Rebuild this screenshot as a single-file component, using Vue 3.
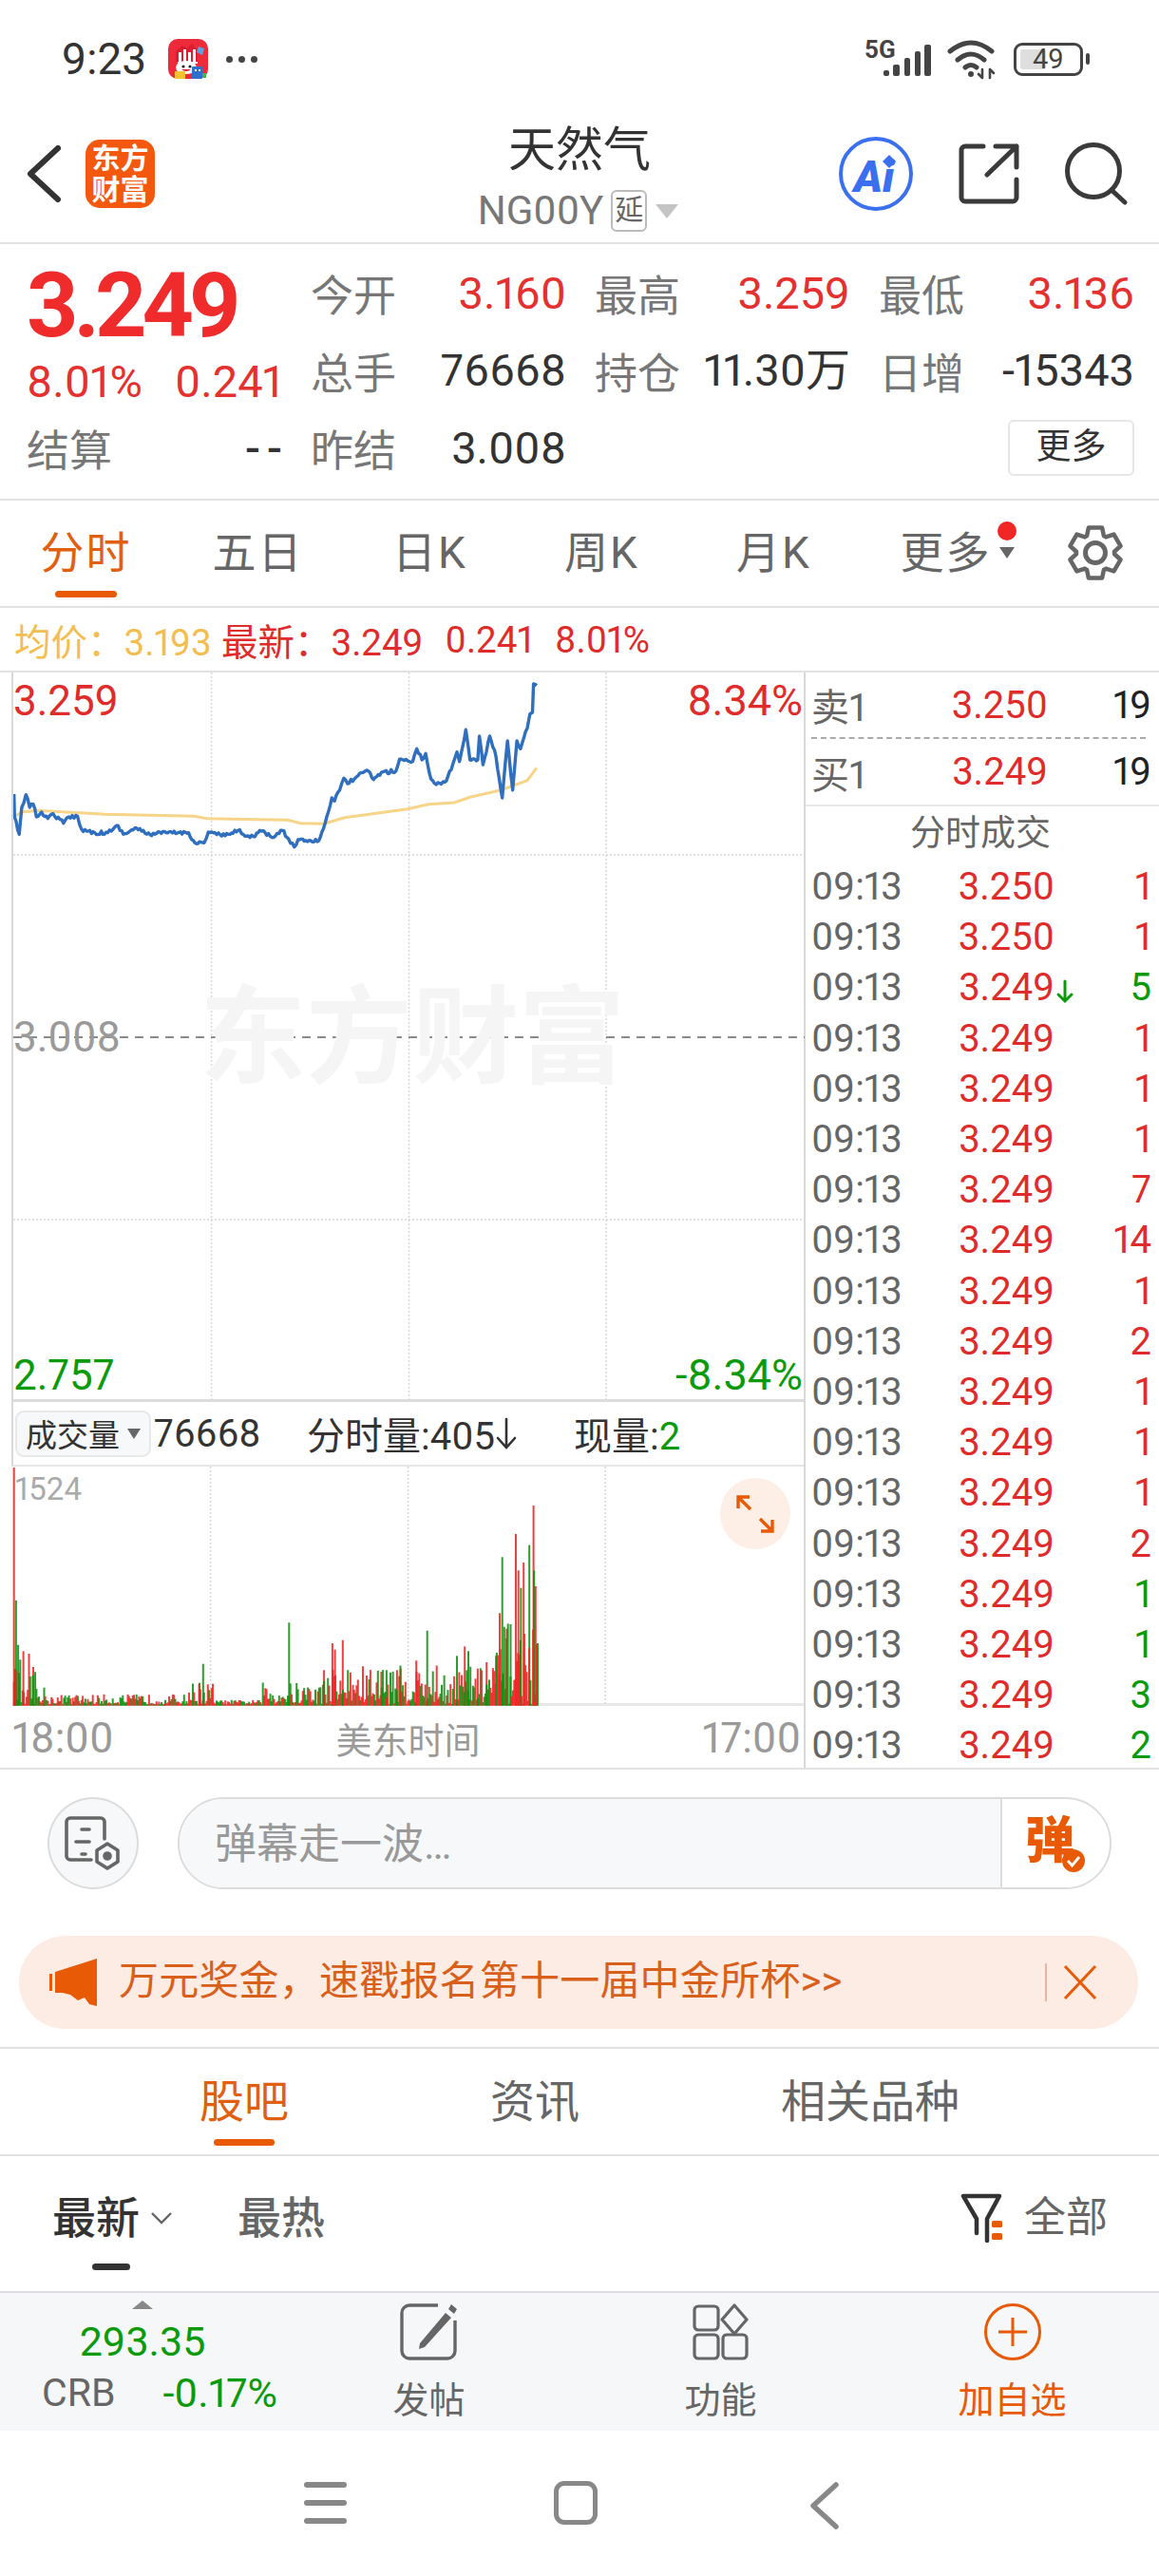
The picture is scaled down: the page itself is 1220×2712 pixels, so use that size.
<script setup>
const X = (z) => +(z / 1.823).toFixed(1)
const MY = (z) => +(530 + z / 3).toFixed(1)
const VY = (z) => +(1430 + z / 3).toFixed(1)

let seed = 12345
const rnd = () => {
  seed = (seed * 16807) % 2147483647
  return seed / 2147483647
}

const blueKeys = [[25,918],[26,990],[35,1045],[40,960],[48,920],[55,960],[62,950],[68,990],[78,975],[90,995],[100,980],[120,1010],[130,990],[147,988],[155,1030],[180,1040],[205,1040],[225,1018],[235,1045],[260,1025],[280,1045],[320,1040],[360,1040],[372,1072],[390,1072],[398,1038],[430,1050],[455,1033],[478,1055],[500,1035],[520,1055],[540,1033],[552,1060],[563,1085],[570,1062],[610,1065],[622,1010],[635,930],[640,940],[650,905],[658,868],[665,885],[685,860],[705,845],[715,872],[730,850],[758,845],[765,808],[790,815],[798,775],[808,810],[815,790],[825,870],[835,888],[855,875],[870,810],[875,785],[880,815],[892,715],[900,810],[915,810],[918,735],[925,825],[938,735],[950,800],[962,930],[972,750],[982,905],[990,750],[997,775],[1010,710],[1015,665],[1020,660],[1022,570],[1028,575]]
const blue = []
blueKeys.forEach(([x, y], i) => {
  const next = blueKeys[i + 1]
  blue.push(`${X(x)},${MY(y)}`)
  if (next && next[0] - x > 5) {
    const n = Math.floor((next[0] - x) / 3)
    for (let k = 1; k < n; k++) {
      const t = k / n
      blue.push(`${X(x + (next[0] - x) * t)},${MY(y + (next[1] - y) * t + (rnd() - 0.5) * 12)}`)
    }
  }
})
const bluePts = blue.join(' ')
const yellowPts = [[25,990],[40,975],[70,970],[200,982],[370,988],[395,995],[550,1000],[575,1010],[620,1012],[660,992],[780,965],[820,950],[870,945],[900,928],[960,905],[1010,875],[1028,835]]
  .map(([x, y]) => `${X(x)},${MY(y)}`).join(' ')

const envelope = (x) => {
  if (x < 70) return 170
  if (x < 360) return 32
  if (x < 410) return 70
  if (x < 500) return 14
  if (x < 620) return 70
  if (x < 950) return 125
  return 260
}
const bars = []
for (let x = 25; x <= 1030; x += 2.4) {
  const h = Math.pow(rnd(), 1.4) * envelope(x) + 4
  bars.push({ x: X(x), top: VY(1097 - h), h: +(h / 3).toFixed(1), c: rnd() > 0.45 ? '#ee2424' : '#0c8f0c' })
}
const peaks = [
  [25,345,'r'],[29,765,'g'],[33,905,'g'],[43,925,'r'],[62,975,'r'],[83,1040,'g'],[388,965,'g'],[381,1025,'g'],[553,835,'g'],
  [620,985,'r'],[636,900,'r'],[641,920,'r'],[656,890,'r'],[730,990,'r'],[740,985,'g'],[760,985,'r'],[767,980,'r'],[797,955,'r'],
  [818,860,'g'],[875,940,'g'],[890,910,'r'],[897,925,'g'],[915,980,'r'],[932,960,'r'],[950,940,'r'],[957,805,'r'],[962,628,'g'],
  [970,885,'g'],[978,840,'g'],[988,555,'r'],[993,670,'r'],[998,725,'g'],[1003,645,'r'],[1014,590,'g'],[1022,465,'r'],[1023,670,'g'],[1026,720,'r'],[1030,900,'g']
].map(([x, t, c]) => ({ x: X(x), top: VY(t), h: +((1097 - t) / 3).toFixed(1), c: c === 'r' ? '#ee2424' : '#0c8f0c' }))
const volBars = [...peaks, ...bars]

const gearPts = (() => {
  const pts = []
  for (let i = 0; i < 6; i++) {
    const a = (i * Math.PI) / 3
    const p = (r, d) => {
      const t = a + d
      return `${(30 + r * Math.sin(t)).toFixed(1)},${(30 - r * Math.cos(t)).toFixed(1)}`
    }
    pts.push(p(20, -0.46), p(27.5, -0.26), p(27.5, 0.26), p(20, 0.46))
  }
  return pts.join(' ')
})()

const stats = [
  [{ l: '今开', v: '3.160', c: 'up' }, { l: '最高', v: '3.259', c: 'up' }, { l: '最低', v: '3.136', c: 'up' }],
  [{ l: '总手', v: '76668' }, { l: '持仓', v: '11.30万' }, { l: '日增', v: '-15343' }]
]
const tabs = ['分时', '五日', '日K', '周K', '月K']
const trades = [
  ['3.250', '1', 'up'], ['3.250', '1', 'up'], ['3.249', '5', 'down', true], ['3.249', '1', 'up'], ['3.249', '1', 'up'], ['3.249', '1', 'up'],
  ['3.249', '7', 'up'], ['3.249', '14', 'up'], ['3.249', '1', 'up'], ['3.249', '2', 'up'], ['3.249', '1', 'up'], ['3.249', '1', 'up'],
  ['3.249', '1', 'up'], ['3.249', '2', 'up'], ['3.249', '1', 'down'], ['3.249', '1', 'down'], ['3.249', '3', 'down'], ['3.249', '2', 'down']
]
const gridX = [221.6, 429.5, 637]
</script>

<template>
  <div class="page">
    <div class="status">
      <span class="time">9:23</span>
      <svg class="app" width="42" height="42" viewBox="0 0 42 42">
        <rect width="42" height="42" rx="10" fill="#ee2b3a" />
        <path d="M8 13 L15 7 L20 10 L25 5 L31 12 V24 H8 Z" fill="#d81e30" />
        <rect x="11" y="14" width="3" height="11" fill="#fff" />
        <rect x="16" y="11" width="3" height="14" fill="#fff" />
        <rect x="21" y="14" width="3" height="11" fill="#fff" />
        <rect x="26" y="11" width="3" height="14" fill="#fff" />
        <rect x="10" y="24" width="21" height="2" fill="#fff" />
        <path d="M32 8 l6 2 l-2 7 l-6 -3 Z" fill="#5aa5e0" />
        <ellipse cx="19" cy="30" rx="11" ry="7" fill="#fff" />
        <circle cx="16" cy="29" r="1.6" fill="#222" />
        <circle cx="23" cy="29" r="1.6" fill="#222" />
        <path d="M14 32 q5 4 10 0 z" fill="#d81e30" />
        <rect x="7" y="34" width="11" height="8" rx="1" fill="#f4c430" />
        <rect x="25" y="29" width="11" height="13" rx="1" fill="#2e6fcb" />
        <rect x="28" y="32" width="2" height="2" fill="#fff" />
        <rect x="32" y="32" width="2" height="2" fill="#fff" />
        <rect x="36" y="36" width="4" height="5" fill="#4cae4c" />
      </svg>
      <span class="dots"><i></i><i></i><i></i></span>
      <div class="status-right">
        <svg width="72" height="52" viewBox="0 0 72 52">
          <text x="0" y="25" class="fiveg">5G</text>
          <g fill="#444">
            <rect x="20" y="38" width="6" height="6" rx="2" />
            <rect x="30" y="32" width="7" height="12" rx="2" />
            <rect x="42" y="25" width="6" height="19" rx="2" />
            <rect x="53" y="18" width="6" height="26" rx="2" />
            <rect x="63" y="11" width="7" height="33" rx="2" />
          </g>
        </svg>
        <svg class="wifi" width="56" height="44" viewBox="0 0 56 44" fill="none" stroke="#444" stroke-linecap="round">
          <path d="M4 14 Q26 -4 48 14" stroke-width="5" />
          <path d="M12 23 Q26 11 40 23" stroke-width="5" />
          <path d="M20 31 Q26 26 32 31" stroke-width="5" />
          <circle cx="26" cy="38" r="3" fill="#444" stroke="none" />
          <path d="M38 33 V42 M34 38 L38 42 M46 42 V33 M46 33 L50 37" stroke-width="2.6" />
        </svg>
        <div class="battery">
          <div class="battery-body">
            <span class="battery-fill"></span>
            <span class="battery-text">49</span>
          </div>
          <span class="battery-tip"></span>
        </div>
      </div>
    </div>

    <header class="header">
      <div class="h-left">
        <svg width="36" height="60" viewBox="0 0 36 60" fill="none"><path d="M33 3 L4 30 L33 57" stroke="#333" stroke-width="6" stroke-linecap="round" stroke-linejoin="round" /></svg>
        <div class="logo">东方<br />财富</div>
      </div>
      <div class="h-center">
        <div class="title">天然气</div>
        <div class="code">
          <span>NG00Y</span><span class="yan">延</span><span class="tri"></span>
        </div>
      </div>
      <div class="h-right">
        <div class="ai">
          <span class="ai-text">Ai</span>
          <svg class="ai-star" width="14" height="14" viewBox="0 0 14 14"><path d="M7 0 L14 7 L7 14 L0 7 Z" fill="#3a6ff0" /></svg>
        </div>
        <svg width="64" height="64" viewBox="0 0 64 64" fill="none" stroke="#3a3a3a" stroke-width="5" stroke-linecap="round" stroke-linejoin="round">
          <path d="M26 3 H7 a4 4 0 0 0 -4 4 V57 a4 4 0 0 0 4 4 H57 a4 4 0 0 0 4 -4 V38" />
          <path d="M30 33 L61 3 M39 3 H61 V25" />
        </svg>
        <svg width="66" height="66" viewBox="0 0 66 66" fill="none" stroke="#3a3a3a" stroke-width="5" stroke-linecap="round">
          <circle cx="30" cy="30" r="27.5" />
          <path d="M49 50 L63 63" />
        </svg>
      </div>
    </header>

    <section class="quote">
      <div class="big">3.249</div>
      <div v-for="s in stats[0]" :key="s.l" class="cell"><span class="lab">{{ s.l }}</span><span class="val" :class="s.c">{{ s.v }}</span></div>
      <div class="cell sub-cell"><span class="sub">8.01%</span><span class="sub">0.241</span></div>
      <div v-for="s in stats[1]" :key="s.l" class="cell"><span class="lab">{{ s.l }}</span><span class="val">{{ s.v }}</span></div>
      <div class="cell"><span class="lab">结算</span><span class="val dash">--</span></div>
      <div class="cell"><span class="lab">昨结</span><span class="val">3.008</span></div>
      <div></div>
      <div class="more-cell"><span class="more-btn">更多</span></div>
    </section>

    <nav class="tabs">
      <div v-for="(t, i) in tabs" :key="t" class="tab" :class="{ active: i === 0 }">
        <span class="tab-label">{{ t }}</span>
        <i class="tab-bar"></i>
      </div>
      <div class="tab tab-more">
        <span class="tab-label">更多</span>
        <i class="red-dot"></i>
        <i class="more-tri"></i>
      </div>
      <div class="gear">
        <svg width="60" height="60" viewBox="0 0 60 60" fill="none" stroke="#666">
          <polygon :points="gearPts" stroke-width="4.5" stroke-linejoin="round" />
          <circle cx="30" cy="30" r="10.5" stroke-width="5" />
        </svg>
      </div>
    </nav>

    <div class="avg">
      <span class="yl">均价：3.193</span>
      <span class="rd">最新：3.249</span>
      <span class="rd">0.241</span>
      <span class="rd">8.01%</span>
    </div>

    <section class="body">
      <div class="left">
        <div class="main-chart">
          <svg class="chart-svg" width="833" height="765" viewBox="13 708 833 765">
            <line v-for="x in gridX" :key="x" :x1="x" :x2="x" y1="708" y2="1473" stroke="#d8d8d8" stroke-width="1.5" stroke-dasharray="2 2" />
            <line x1="13" x2="846" y1="900" y2="900" stroke="#d8d8d8" stroke-width="1.5" stroke-dasharray="2 2" />
            <line x1="13" x2="846" y1="1284" y2="1284" stroke="#d8d8d8" stroke-width="1.5" stroke-dasharray="2 2" />
            <line x1="13" x2="846" y1="1092" y2="1092" stroke="#8a8a8a" stroke-width="2" stroke-dasharray="9 7" />
            <polyline :points="yellowPts" fill="none" stroke="#f6d488" stroke-width="3" />
            <polyline :points="bluePts" fill="none" stroke="#2f6fbe" stroke-width="3.4" stroke-linejoin="round" />
          </svg>
          <div class="watermark">东方财富</div>
          <span class="cl tl rd">3.259</span>
          <span class="cl tr rd">8.34%</span>
          <span class="cl ml gr">3.008</span>
          <span class="cl bl grn">2.757</span>
          <span class="cl br grn">-8.34%</span>
        </div>
        <div class="vol-head">
          <div class="vol-select"><span>成交量</span><i class="sel-tri"></i></div>
          <span class="vol-total">76668</span>
          <span class="vol-fs">分时量:405<svg width="24" height="44" viewBox="0 0 24 44" fill="none" stroke="#333" stroke-width="2.6" stroke-linecap="round"><path d="M12 7 V37 M3 27 L12 37 L21 27" /></svg></span>
          <span class="vol-now">现量:<b>2</b></span>
        </div>
        <div class="vol">
          <svg class="chart-svg" width="833" height="252" viewBox="13 1544 833 252">
            <line v-for="x in gridX" :key="x" :x1="x" :x2="x" y1="1544" y2="1796" stroke="#d8d8d8" stroke-width="1.5" stroke-dasharray="2 2" />
            <rect v-for="(b, i) in volBars" :key="i" :x="b.x" :y="b.top" width="2" :height="b.h" :fill="b.c" opacity="0.88" />
          </svg>
          <span class="vol-max">1524</span>
          <div class="expand">
            <svg width="40" height="40" viewBox="0 0 40 40" fill="none" stroke="#e85a05" stroke-width="3.4">
              <path d="M2 14 V2 H14 M2 2 L15 15 M38 26 V38 H26 M38 38 L25 25" />
            </svg>
          </div>
        </div>
        <div class="axis">
          <span class="ax-t">18:00</span>
          <span class="ax-c">美东时间</span>
          <span class="ax-t">17:00</span>
        </div>
      </div>

      <aside class="right">
        <div class="book"><span class="book-l">卖1</span><span class="book-p">3.250</span><span class="book-v">19</span></div>
        <div class="book-sep"></div>
        <div class="book"><span class="book-l">买1</span><span class="book-p">3.249</span><span class="book-v">19</span></div>
        <div class="tr-title">分时成交</div>
        <div class="tr-list">
          <div v-for="(t, i) in trades" :key="i" class="tr-row">
            <span class="tr-time">09:13</span>
            <span class="tr-price">{{ t[0] }}
              <svg v-if="t[3]" class="tr-arrow" width="20" height="30" viewBox="0 0 20 30" fill="none" stroke="#0a9a0a" stroke-width="3" stroke-linecap="round"><path d="M10 4 V25 M3 18 L10 25 L17 18" /></svg>
            </span>
            <span class="tr-amt" :class="t[2]">{{ t[1] }}</span>
          </div>
        </div>
      </aside>
    </section>

    <section class="comment">
      <div class="input-row">
        <div class="cbtn">
          <svg width="64" height="58" viewBox="0 0 64 58" fill="none" stroke="#666" stroke-width="3.6" stroke-linecap="round" stroke-linejoin="round">
            <path d="M44 24 V6 a4 4 0 0 0 -4 -4 H8 a4 4 0 0 0 -4 4 V42 a4 4 0 0 0 4 4 H30" />
            <path d="M20 14 H28 M14 27 H28 M20 40 H24" />
            <path d="M47 29 L58 36 V48 L47 55 L36 48 V36 Z" />
            <circle cx="47" cy="42" r="3" fill="#666" />
          </svg>
        </div>
        <div class="cinput">
          <div class="cfield">弹幕走一波…</div>
          <div class="csend">
            <span class="dan">弹</span>
            <svg class="dan-check" width="26" height="26" viewBox="0 0 26 26"><circle cx="13" cy="13" r="12" fill="#e85a05" /><path d="M7 13 L11.5 18 L19 9" fill="none" stroke="#fff" stroke-width="2.8" /></svg>
          </div>
        </div>
      </div>
      <div class="banner">
        <svg width="50" height="50" viewBox="0 0 50 50"><path d="M0 16 H3 V34 H0 Z M6 14 L50 0 V50 L42 48 L37 41 L30 44 L22 38 L14 36 H6 Z" fill="#e85a05" /></svg>
        <span class="banner-text">万元奖金，速戳报名第十一届中金所杯&gt;&gt;</span>
        <i class="banner-sep"></i>
        <svg width="36" height="38" viewBox="0 0 36 38" fill="none" stroke="#e85a05" stroke-width="3"><path d="M2 2 L34 36 M34 2 L2 36" /></svg>
      </div>
    </section>

    <nav class="sub-tabs">
      <div class="stab active"><span>股吧</span><i></i></div>
      <div class="stab"><span>资讯</span><i></i></div>
      <div class="stab"><span>相关品种</span><i></i></div>
    </nav>

    <div class="sort">
      <div class="sort-item on">
        <span>最新</span>
        <svg width="24" height="14" viewBox="0 0 24 14" fill="none" stroke="#666" stroke-width="2.4"><path d="M2 2 L12 12 L22 2" /></svg>
        <i class="sort-bar"></i>
      </div>
      <div class="sort-item hot"><span>最热</span></div>
      <div class="sort-filter">
        <svg width="46" height="52" viewBox="0 0 46 52" fill="none">
          <path d="M3 3 H41 L28 27 V50 M3 3 L17 27 V42" stroke="#333" stroke-width="4.5" stroke-linecap="round" stroke-linejoin="round" />
          <rect x="33" y="29" width="11" height="7" rx="1.5" fill="#e85a05" />
          <rect x="33" y="42" width="11" height="7" rx="1.5" fill="#e85a05" />
        </svg>
        <span>全部</span>
      </div>
    </div>

    <footer class="bar">
      <div class="crb">
        <i class="crb-tri"></i>
        <div class="crb-val">293.35</div>
        <div class="crb-line"><span class="crb-name">CRB</span><span class="crb-pct">-0.17%</span></div>
      </div>
      <div class="bar-item">
        <svg width="62" height="60" viewBox="0 0 62 60" fill="none" stroke="#666" stroke-width="3.4" stroke-linejoin="round">
          <path d="M40 2 H10 a8 8 0 0 0 -8 8 V50 a8 8 0 0 0 8 8 H50 a8 8 0 0 0 8 -8 V18" />
          <path d="M54 1 L60 6 L57 11 L51 6 Z M48 10 L54 15 L26 46 L20 48 L21 42 Z" fill="#666" stroke="none" />
        </svg>
        <span>发帖</span>
      </div>
      <div class="bar-item">
        <svg width="60" height="60" viewBox="0 0 60 60" fill="none" stroke="#666" stroke-width="3.2" stroke-linejoin="round">
          <rect x="2" y="3" width="25" height="25" rx="4" />
          <path d="M44 2 L57 17 L44 32 L31 17 Z" />
          <rect x="2" y="33" width="25" height="25" rx="4" />
          <rect x="32" y="33" width="25" height="25" rx="4" />
        </svg>
        <span>功能</span>
      </div>
      <div class="bar-item add">
        <svg width="60" height="60" viewBox="0 0 60 60" fill="none" stroke="#e85a05" stroke-width="3">
          <circle cx="30" cy="30" r="28.5" />
          <path d="M15 30 H45 M30 15 V45" />
        </svg>
        <span>加自选</span>
      </div>
    </footer>

    <div class="nav">
      <div class="nav-menu"><i></i><i></i><i></i></div>
      <div class="nav-home"></div>
      <svg width="32" height="50" viewBox="0 0 32 50" fill="none"><path d="M29 3 L5 25 L29 47" stroke="#888" stroke-width="5.5" stroke-linecap="round" stroke-linejoin="round" /></svg>
    </div>
  </div>
</template>

<style scoped>
.page {
  position: relative;
  width: 1220px;
  height: 2712px;
  background: #fff;
  overflow: hidden;
  display: flex;
  flex-direction: column;
  font-family: Roboto, "Noto Sans CJK SC", sans-serif;
  font-variant-numeric: proportional-nums;
  color: #333;
}
i { display: block; font-style: normal; }

/* status bar */
.status {
  height: 120px;
  flex: none;
  display: flex;
  align-items: center;
  padding: 4px 73px 0 65px;
  box-sizing: border-box;
}
.time { font-size: 46px; color: #333; line-height: 1; width: 112px; }
.app { flex: none; }
.dots { display: flex; gap: 6px; margin-left: 19px; }
.dots i { width: 7px; height: 7px; border-radius: 50%; background: #444; }
.status-right { margin-left: auto; display: flex; align-items: center; }
.fiveg { font: 700 26px Roboto, sans-serif; fill: #444; }
.wifi { margin-left: 14px; margin-right: 15px; }
.battery { display: flex; align-items: center; gap: 3px; }
.battery-body {
  position: relative;
  width: 73px;
  height: 35px;
  box-sizing: border-box;
  border: 3.5px solid #444;
  border-radius: 9px;
  display: flex;
  align-items: center;
  justify-content: center;
}
.battery-fill { position: absolute; left: 4px; top: 4px; bottom: 4px; width: 27px; background: #dedede; border-radius: 3px; }
.battery-text { position: relative; font-size: 29px; color: #444; }
.battery-tip { width: 4px; height: 12px; background: #444; border-radius: 2px; }

/* header */
.header {
  height: 137px;
  flex: none;
  box-sizing: border-box;
  border-bottom: 2px solid #e2e2e2;
  display: grid;
  grid-template-columns: 1fr auto 1fr;
  align-items: start;
}
.h-left { display: flex; align-items: center; padding: 27px 0 0 28px; gap: 26px; }
.logo {
  width: 73px;
  height: 72px;
  border-radius: 15px;
  background: #f4570e;
  color: #fff;
  font-size: 30px;
  font-weight: 700;
  line-height: 33px;
  text-align: center;
  padding-top: 3px;
  box-sizing: border-box;
  letter-spacing: 0;
}
.h-center { display: flex; flex-direction: column; align-items: center; padding-top: 7px; margin-left: -3px; }
.title { font-size: 50px; line-height: 62px; color: #333; margin-left: 3px; }
.code { display: flex; align-items: center; font-size: 42px; line-height: 48px; color: #777; margin-top: 9px; }
.yan {
  width: 38px;
  height: 44px;
  box-sizing: border-box;
  border: 2px solid #bbb;
  border-radius: 6px;
  font-size: 30px;
  line-height: 38px;
  text-align: center;
  margin-left: 8px;
  color: #666;
}
.tri {
  width: 0;
  height: 0;
  border-left: 12px solid transparent;
  border-right: 12px solid transparent;
  border-top: 15px solid #c4c4c4;
  margin-left: 9px;
}
.h-right { display: flex; justify-content: flex-end; align-items: center; gap: 48px; padding: 24px 33px 0 0; }
.ai {
  position: relative;
  width: 78px;
  height: 78px;
  box-sizing: border-box;
  border: 4px solid #3a6ff0;
  border-radius: 50%;
  text-align: center;
  margin-right: 0;
}
.ai-text { font-size: 46px; line-height: 76px; font-weight: 900; font-style: italic; color: #3a6ff0; margin-left: -4px; display: block; }
.ai-star { position: absolute; right: 14px; top: 15px; }

/* quote */
.quote {
  height: 270px;
  flex: none;
  box-sizing: border-box;
  border-bottom: 2px solid #e2e2e2;
  padding: 11px 28px 0 28px;
  display: grid;
  grid-template-columns: repeat(4, 269px);
  column-gap: 30px;
  grid-template-rows: repeat(3, 81.5px);
  align-items: center;
}
.big {
  font-size: 95px;
  font-weight: 700;
  color: #f02b2b;
  line-height: 70px;
  letter-spacing: -5px;
  margin-top: 26px;
  white-space: nowrap;
}
.cell { display: flex; justify-content: space-between; align-items: center; white-space: nowrap; }
.sub-cell { margin-top: 24px; }
.lab { font-size: 45px; color: #777; }
.val { font-size: 47px; line-height: 56px; color: #333; }
.val.up { color: #e53030; }
.val.dash { letter-spacing: 7px; margin-right: -7px; font-weight: 500; }
.sub { font-size: 47px; line-height: 56px; color: #e53030; }
.more-cell { display: flex; justify-content: flex-end; }
.more-btn {
  width: 133px;
  height: 59px;
  box-sizing: border-box;
  border: 2px solid #e6e6e6;
  border-radius: 6px;
  font-size: 37px;
  line-height: 53px;
  text-align: center;
  color: #333;
}

/* tabs */
.tabs {
  height: 113px;
  flex: none;
  box-sizing: border-box;
  border-bottom: 2px solid #e2e2e2;
  display: flex;
}
.tab { width: 181px; display: flex; flex-direction: column; align-items: center; padding-top: 26px; box-sizing: border-box; position: relative; }
.tab-label { font-size: 46px; line-height: 58px; color: #666; white-space: nowrap; letter-spacing: 2px; }
.tab-bar { width: 65px; height: 7px; margin-top: 11px; border-radius: 4px; }
.tab.active .tab-label { color: #e0600f; }
.tab.active .tab-bar { background: #e85a05; }
.red-dot { position: absolute; left: 145px; top: 22px; width: 20px; height: 20px; border-radius: 50%; background: #f32626; }
.more-tri {
  position: absolute;
  left: 147px;
  top: 49px;
  width: 0;
  height: 0;
  border-left: 8px solid transparent;
  border-right: 8px solid transparent;
  border-top: 12px solid #666;
}
.gear { flex: 1; display: flex; justify-content: center; padding-top: 25px; box-sizing: border-box; }

/* average */
.avg {
  height: 68px;
  flex: none;
  box-sizing: border-box;
  border-bottom: 2px solid #e2e2e2;
  padding: 0 0 0 15px;
  display: flex;
  align-items: center;
  font-size: 38.5px;
  white-space: nowrap;
}
.yl { color: #f4bd50; width: 218px; }
.rd { color: #e02b2b; }
.avg .rd { margin-right: 23px; }

/* body */
.body {
  height: 1155px;
  flex: none;
  box-sizing: border-box;
  border-bottom: 2px solid #e2e2e2;
  display: flex;
}
.left { width: 846px; flex: none; padding-left: 13px; box-sizing: border-box; }
.main-chart {
  position: relative;
  height: 768px;
  box-sizing: border-box;
  border-left: 2px solid #d8d8d8;
  border-bottom: 3px solid #dcdcdc;
  margin-left: -1px;
}
.chart-svg { position: absolute; left: 0; top: 0; display: block; }
.watermark {
  position: absolute;
  left: 196px;
  top: 330px;
  font-size: 112px;
  line-height: 112px;
  font-weight: 700;
  color: #f5f5f5;
  white-space: nowrap;
}
.cl { position: absolute; font-size: 44px; line-height: 50px; white-space: nowrap; }
.tl { left: 0; top: 5px; }
.tr { right: 1px; top: 5px; font-size: 45px; }
.ml { left: 0; top: 359px; color: #999; }
.gr { color: #9a9a9a; }
.bl { left: 0; top: 715px; }
.br { right: 1px; top: 715px; font-size: 45px; }
.grn { color: #0a9a0a; }
.vol-head {
  height: 68px;
  position: relative;
  border-left: 2px solid #d8d8d8;
  margin-left: -1px;
  border-bottom: 2px solid #e6e6e6;
  box-sizing: border-box;
  display: flex;
  align-items: center;
  font-size: 40px;
  white-space: nowrap;
  color: #333;
}
.vol-select {
  width: 143px;
  height: 49px;
  box-sizing: border-box;
  margin-left: 2px;
  background: #f7f8fa;
  border: 2px solid #e8e8e8;
  border-radius: 9px;
  display: flex;
  align-items: center;
  padding-left: 9px;
  font-size: 33px;
  gap: 8px;
}
.sel-tri {
  width: 0;
  height: 0;
  border-left: 7px solid transparent;
  border-right: 7px solid transparent;
  border-top: 11px solid #666;
}
.vol-total { margin-left: 3px; width: 161px; }
.vol-fs { display: flex; align-items: center; width: 281px; }
.vol-now b { font-weight: 400; color: #0a9a0a; }
.vol {
  position: relative;
  height: 252px;
  border-bottom: 3px solid #e8e8e8;
  box-sizing: border-box;
}
.vol .chart-svg { overflow: visible; }
.vol-max { position: absolute; left: 3px; top: 7px; font-size: 33px; line-height: 34px; color: #aaa; }
.expand {
  position: absolute;
  left: 745px;
  top: 12px;
  width: 74px;
  height: 75px;
  border-radius: 50%;
  background: #fdeee6;
  display: flex;
  align-items: center;
  justify-content: center;
}
.axis {
  height: 63px;
  display: flex;
  justify-content: space-between;
  align-items: center;
  padding: 4px 3px 0 0;
  box-sizing: border-box;
  color: #9a9a9a;
}
.ax-t { font-size: 44px; }
.ax-c { font-size: 38px; margin-left: 0; }

.right { flex: 1; border-left: 2px solid #d8d8d8; box-sizing: border-box; overflow: hidden; }
.book { height: 68px; display: grid; grid-template-columns: 94px 155px 1fr; align-items: center; padding: 0 8px 0 6px; font-size: 40px; }
.book-l { color: #666; white-space: nowrap; }
.book-p { color: #e02b2b; text-align: right; }
.book-v { text-align: right; color: #222; }
.book-sep { height: 0; border-top: 2px dashed #aaa; margin: 0 14px 0 6px; }
.book-sep + .book { border-bottom: 2px solid #eaeaea; height: 69px; }
.tr-title { height: 58px; line-height: 58px; text-align: center; font-size: 37px; color: #666; margin-left: -4px; }
.tr-row { height: 53.2px; display: grid; grid-template-columns: 94px 162px 1fr; align-items: center; padding: 0 8px 0 6px; font-size: 40px; }
.tr-time { color: #666; }
.tr-price { position: relative; color: #e02b2b; text-align: right; }
.tr-arrow { position: absolute; left: 100%; top: 13px; margin-left: 1px; }
.tr-amt { text-align: right; }
.tr-amt.up { color: #e02b2b; }
.tr-amt.down { color: #0a9a0a; }

/* comment */
.comment { height: 294px; flex: none; box-sizing: border-box; border-bottom: 2px solid #e2e2e2; padding: 29px 0 0; }
.input-row { display: flex; padding: 0 50px; gap: 41px; }
.cbtn {
  width: 96px;
  height: 97px;
  flex: none;
  box-sizing: border-box;
  border: 2px solid #dcdcdc;
  border-radius: 50%;
  background: #f7f8fa;
  display: flex;
  align-items: center;
  justify-content: center;
}
.cinput {
  width: 983px;
  height: 97px;
  flex: none;
  box-sizing: border-box;
  border: 2px solid #dcdcdc;
  border-radius: 50px;
  display: flex;
  overflow: hidden;
}
.cfield {
  width: 866px;
  background: #f7f8fa;
  border-right: 2px solid #dcdcdc;
  font-size: 44px;
  line-height: 97px;
  color: #999;
  padding-left: 37px;
  box-sizing: border-box;
}
.csend { position: relative; flex: 1; }
.dan { position: absolute; left: 24px; top: 14px; font-size: 52px; line-height: 62px; font-weight: 900; color: #e85a05; }
.dan-check { position: absolute; left: 62px; top: 52px; }
.banner {
  margin: 49px 22px 0 20px;
  height: 98px;
  border-radius: 50px;
  background: #fdece4;
  display: flex;
  align-items: center;
  padding-left: 32px;
  box-sizing: border-box;
}
.banner-text { font-size: 42px; line-height: 50px; color: #d9601a; margin: -3px 0 0 23px; white-space: nowrap; letter-spacing: 0.2px; }
.banner-sep { width: 2px; height: 40px; background: #e8b79c; margin-left: 213px; margin-right: 17px; }

/* sub tabs */
.sub-tabs {
  height: 113px;
  flex: none;
  box-sizing: border-box;
  border-bottom: 2px solid #e2e2e2;
  display: flex;
  gap: 212px;
  padding: 27px 0 0 210px;
}
.stab { display: flex; flex-direction: column; align-items: center; font-size: 47px; line-height: 58px; color: #666; }
.stab i { width: 64px; height: 7px; margin-top: 10px; border-radius: 4px; }
.stab.active { color: #e0600f; }
.stab.active i { background: #e85a05; }

/* sort */
.sort {
  height: 144px;
  flex: none;
  box-sizing: border-box;
  display: flex;
  align-items: flex-start;
  padding: 36px 54px 0 55px;
  font-size: 46px;
  line-height: 58px;
  border-bottom: 2px solid #dcdce2;
}
.sort-item { position: relative; display: flex; align-items: center; font-weight: 500; }
.sort-item.on { color: #333; width: 195px; gap: 11px; }
.sort-item.hot { color: #666; }
.sort-bar { position: absolute; left: 42px; top: 77px; width: 40px; height: 7px; background: #333; border-radius: 4px; }
.sort-filter { margin-left: auto; display: flex; align-items: center; gap: 21px; color: #666; font-size: 44px; font-weight: 400; }

/* bottom bar */
.bar {
  height: 145px;
  flex: none;
  background: #f6f7f9;
  display: grid;
  grid-template-columns: 298px repeat(3, 307px);
}
.crb { position: relative; padding-top: 24px; box-sizing: border-box; }
.crb-tri {
  position: absolute;
  left: 139px;
  top: 8px;
  width: 0;
  height: 0;
  border-left: 11px solid transparent;
  border-right: 11px solid transparent;
  border-bottom: 9px solid #888;
}
.crb-val { width: 300px; text-align: center; font-size: 43px; line-height: 54px; color: #0a9a0a; }
.crb-line { display: flex; align-items: center; justify-content: space-between; padding: 0 6px 0 44px; margin-top: 1px; line-height: 52px; }
.crb-name { font-size: 41px; color: #666; }
.crb-pct { font-size: 43px; color: #0a9a0a; }
.bar-item { display: flex; flex-direction: column; align-items: center; padding-top: 11px; box-sizing: border-box; font-size: 38px; line-height: 48px; color: #666; }
.bar-item span { margin-top: 18px; }
.bar-item.add { color: #e85a05; }

/* nav */
.nav { flex: 1; display: flex; padding-top: 54px; align-items: flex-start; box-sizing: border-box; padding-left: 320px; }
.nav-menu { width: 45px; display: flex; flex-direction: column; gap: 13px; margin-right: 218px; }
.nav-menu i { height: 6px; background: #888; border-radius: 3px; }
.nav-home { width: 46px; height: 46px; box-sizing: border-box; border: 5px solid #888; border-radius: 11px; margin-right: 222px; margin-top: -1px; }
</style>
